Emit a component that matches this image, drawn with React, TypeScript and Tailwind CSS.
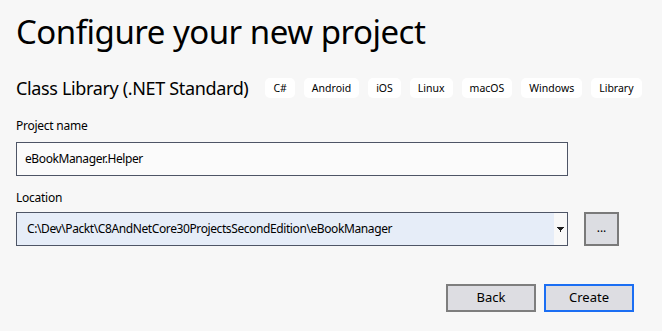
import React from "react";

const tags = ["C#", "Android", "iOS", "Linux", "macOS", "Windows", "Library"];

export default function App() {
  return (
    <div
      className="w-[662px] h-[331px] bg-[#f7f7f7] text-[#1e1e1e] overflow-hidden"
      style={{ fontFamily: '"Noto Sans", "Open Sans", sans-serif' }}
    >
      <div className="pl-4 pt-[10px] flex flex-col">
        <h1 className="text-[33px] leading-[44px] font-normal text-black tracking-[-0.5px] whitespace-nowrap">
          Configure your new project
        </h1>
        <div className="mt-[23px] flex items-center h-[22px]">
          <span className="text-[18px] leading-[22px] text-black tracking-[-0.35px] whitespace-nowrap">
            Class Library (.NET Standard)
          </span>
          <div className="ml-[17px] flex gap-[9px]">
            {tags.map((t) => (
              <span
                key={t}
                className="h-[20px] px-[8px] bg-white rounded-[5px] text-[10.5px] leading-[20px] text-black whitespace-nowrap"
              >
                {t}
              </span>
            ))}
          </div>
        </div>
        <label className="mt-[19px] text-[12px] leading-[16px] text-black tracking-[-0.25px]">Project name</label>
        <div className="mt-[8px] w-[552px] h-[34px] border border-[#4e5566] bg-[#fbfbfb] flex items-center pl-[8px] text-[12px] tracking-[-0.4px] text-black">
          eBookManager.Helper
        </div>
        <label className="mt-[14px] text-[12px] leading-[16px] text-black tracking-[-0.25px]">Location</label>
        <div className="mt-[6px] flex items-center gap-[16px]">
          <div className="w-[552px] h-[34px] border border-[#4e5566] bg-[#e6edf8] flex items-center text-[12px] text-black">
            <span className="flex-1 pl-[10px] whitespace-nowrap tracking-[-0.4px]">
              C:\Dev\Packt\C8AndNetCore30ProjectsSecondEdition\eBookManager
            </span>
            <div className="w-[13px] h-full bg-[#f8f8f8] flex items-center justify-center">
              <svg width="7" height="5" viewBox="0 0 7 5">
                <path d="M0 0h7v1H6v1H5v1H4v2H3V3H2V2H1V1H0z" fill="#1e1e1e" />
              </svg>
            </div>
          </div>
          <button className="w-[35px] h-[34px] border-2 border-[#7a7a7a] bg-[#dcdde2] flex items-center justify-center text-[12px] leading-none text-black pb-[2px]">
            ...
          </button>
        </div>
        <div className="mt-[38px] flex justify-end gap-[8px] pr-[28px]">
          <button className="w-[90px] h-[28px] border-2 border-[#7e7e7e] bg-[#dddde2] text-[13px] text-black">
            Back
          </button>
          <button className="w-[90px] h-[28px] border-2 border-[#1b6ef3] bg-[#dddde2] text-[13px] text-black">
            Create
          </button>
        </div>
      </div>
    </div>
  );
}
